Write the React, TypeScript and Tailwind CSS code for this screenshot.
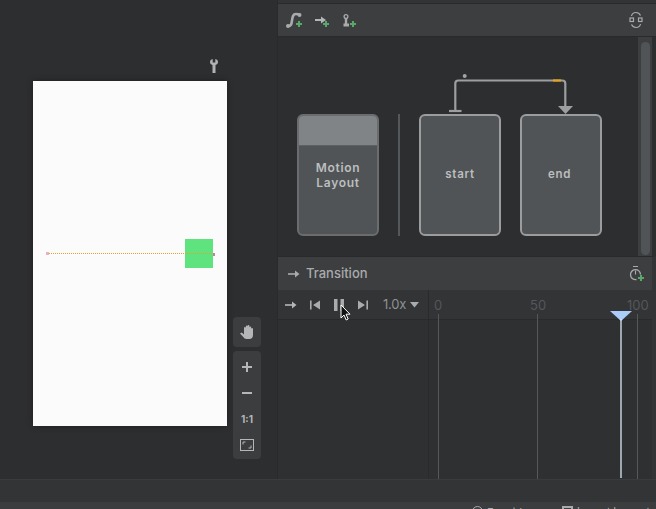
import React from "react";

const font = { fontFamily: '"Inter", "Liberation Sans", sans-serif' };

function Plus({ x, y }: { x: number; y: number }) {
  return <path d={`M${x - 3} ${y}h6M${x} ${y - 3}v6`} stroke="#59a869" strokeWidth="2" fill="none" />;
}

function NodeCard({ label, end }: { label: string; end?: boolean }) {
  return (
    <div className="w-[82px] h-[122px] rounded-[6px] border-2 border-[#9a9c9d] bg-[#505456] flex items-center justify-center text-[11.5px] font-semibold tracking-[0.7px] text-[#bcbebf]">
      <span className={end ? "pr-[3px]" : ""}>{label}</span>
    </div>
  );
}

export default function App() {
  return (
    <div className="w-[656px] h-[509px] overflow-hidden flex flex-col bg-[#2d2e30]" style={font}>
      <div className="flex h-[479px]">
        {/* Design surface */}
        <div className="relative w-[278px] pt-[81px] pl-[33px] bg-[#2d2e30] border-r border-[#292a2c]">
          <svg className="absolute left-[208px] top-[58px]" width="12" height="16" viewBox="0 0 12 16">
            <path d="M4.700 1C3 1.300 2 2.700 2 4c0 1.500 1 2.500 2.500 3v8h3V7C9 6.500 10 5.500 10 4c0-1.300-1-2.700-2.700-3v3.500H4.700z" fill="#b0b2b3" />
          </svg>
          <div className="relative w-[194px] h-[345px] bg-[#fbfbfb] shadow-[0_0_6px_rgba(0,0,0,0.35)]">
            <div className="absolute left-[152px] top-[158px] w-[28px] h-[29px] bg-[#5fe37e]" />
            <div className="absolute left-[15px] top-[172px] w-[166px] border-t border-dotted border-[#e8a02c]" />
            <div className="absolute left-[13px] top-[171px] w-[3px] h-[3px] bg-[#e6b3c1]" />
            <div className="absolute left-[180px] top-[172px] w-[2px] h-[3px] bg-[#c97f95]" />
          </div>
          <div className="absolute left-[233px] top-[317px] flex flex-col gap-[4px] text-[#b4b6b7]">
            <div className="w-[28px] h-[30px] rounded-[4px] bg-[#3c3d3f] flex items-center justify-center">
              <svg width="16" height="16" viewBox="0 0 16 16">
                <path d="M1 9.500 2.800 8.500 5 10.500V4a.9.900 0 0 1 1.800 0V7V2.500a.9.900 0 0 1 1.800 0V7V2a.9.900 0 0 1 1.800 0V7.500V3.500a.9.900 0 0 1 1.800 0V7.500V5a.9.900 0 0 1 1.800 0v6c0 2.500-1.500 4-3.500 4H7.500c-1.500 0-2.500-.8-3.200-2z" fill="#b4b6b7" />
              </svg>
            </div>
            <div className="w-[28px] h-[108px] rounded-[4px] bg-[#3c3d3f] flex flex-col items-center pt-[6px] gap-[6px]">
              <svg width="20" height="20" viewBox="0 0 20 20"><path d="M10 5v10M5 10h10" stroke="#b4b6b7" strokeWidth="2" /></svg>
              <svg width="20" height="20" viewBox="0 0 20 20"><path d="M5 10h10" stroke="#b4b6b7" strokeWidth="2" /></svg>
              <div className="h-[20px] flex items-center text-[10px] font-bold text-[#b4b6b7]">1:1</div>
              <svg width="20" height="20" viewBox="0 0 20 20" fill="none">
                <rect x="3.500" y="4.500" width="13" height="11" stroke="#b4b6b7" />
                <path d="M6 9.500V7h2.500M14 10.500V13h-2.500" stroke="#b4b6b7" />
              </svg>
            </div>
          </div>
        </div>

        {/* Right column */}
        <div className="w-[378px] flex flex-col">
          <div className="h-[4px] border-b border-[#292a2c] bg-[#333436]" />
          <div className="h-[33px] flex items-center justify-between pl-[7px] pr-[13px] bg-[#3c3e40] border-b border-[#292a2c]">
            <div className="flex items-center gap-[9px]">
              <svg width="20" height="20" viewBox="0 0 20 20" fill="none">
                <path d="M3 16c3 0 3.500-1.500 4-5.500S8 4 11 4c2 0 3 .5 4 1" stroke="#a8aaab" strokeWidth="2.600" />
                <circle cx="3" cy="16" r="2" fill="#a8aaab" />
                <circle cx="14.500" cy="5" r="2" fill="#a8aaab" />
                <Plus x={14} y={14} />
              </svg>
              <svg width="18" height="20" viewBox="0 0 18 20" fill="none">
                <path d="M1 10h7" stroke="#b4b6b7" strokeWidth="2" />
                <path d="M7 6.500l5 3.500-5 3.500z" fill="#b4b6b7" />
                <Plus x={12} y={14} />
              </svg>
              <svg width="18" height="20" viewBox="0 0 18 20" fill="none">
                <circle cx="5" cy="6.500" r="1.900" stroke="#a8aaab" strokeWidth="1.300" />
                <path d="M5 8v6" stroke="#a8aaab" strokeWidth="2.400" />
                <path d="M2.500 13.500h5.500v3H2.500z" fill="#a8aaab" />
                <Plus x={12} y={14} />
              </svg>
            </div>
            <svg width="14" height="18" viewBox="0 0 14 18" fill="none" stroke="#a8aaab" strokeWidth="1.200">
              <path d="M2.500 5C3 2.500 5 1.500 7 1.500s3.500 1 4.500 3M11.500 13c-.5 2.500-2.500 3.500-4.500 3.500s-3.500-1-4.500-3" />
              <rect x="1" y="7" width="3.500" height="3.500" />
              <rect x="9.500" y="7" width="3.500" height="3.500" />
            </svg>
          </div>

          {/* Graph */}
          <div className="relative h-[219px] flex bg-[#2d2e30]">
            <div className="w-[360px] pl-[19px] pt-[77px] flex items-start">
              <div className="w-[82px] h-[122px] rounded-[6px] border-2 border-[#6a6c6e] bg-[#505456] flex flex-col overflow-hidden">
                <div className="h-[30px] bg-[#808486] border-b border-[#5e6163]" />
                <div className="flex-1 pt-[14px] text-center text-[12px] leading-[15px] font-semibold tracking-[0.7px] text-[#bcbebf]">
                  Motion<br />Layout
                </div>
              </div>
              <div className="ml-[19px] w-[2px] h-[122px] bg-[#55585a]" />
              <div className="ml-[19px]"><NodeCard label="start" /></div>
              <div className="ml-[19px]"><NodeCard label="end" end /></div>
            </div>
            <div className="w-[14px] bg-[#3c3e40] pl-[3px] pt-[5px]">
              <div className="w-[9px] h-[213px] rounded-[5px] bg-[#505456]" />
            </div>
            <svg className="absolute left-[170px] top-[35px]" width="126" height="45" viewBox="0 0 126 45" fill="none">
              <circle cx="16.700" cy="4" r="2" fill="#a2a4a5" />
              <path d="M7.300 39V11.500a3 3 0 0 1 3-3H114.300a3 3 0 0 1 3 3V36" stroke="#9c9e9f" strokeWidth="2.200" />
              <path d="M1 39h12.500" stroke="#9c9e9f" strokeWidth="2.200" />
              <path d="M105 8.500h8" stroke="#e8a317" strokeWidth="2.200" />
              <path d="M110 34h15l-7.500 8z" fill="#9c9e9f" />
            </svg>
          </div>

          {/* Transition header */}
          <div className="h-[34px] flex items-center justify-between pl-[10px] pr-[8px] bg-[#3c3e40] border-t border-r-4 border-t-[#292a2c] border-r-[#333436]">
            <div className="flex items-center gap-[6px] text-[13px] font-medium text-[#a9abac]">
              <svg width="12" height="12" viewBox="0 0 12 12" fill="none">
                <path d="M0 6h8" stroke="#a9abac" strokeWidth="1.600" />
                <path d="M7 2.500 11.500 6 7 9.500z" fill="#a9abac" />
              </svg>
              <span>Transition</span>
            </div>
            <svg width="16" height="18" viewBox="0 0 16 18" fill="none">
              <path d="M5 1.500h5M7.500 5.500v4" stroke="#a8aaab" strokeWidth="1.100" />
              <path d="M12.500 9.500a5 5 0 1 0-4 5" stroke="#a8aaab" strokeWidth="1.300" />
              <Plus x={13} y={13} />
            </svg>
          </div>

          {/* Timeline */}
          <div className="relative flex-1 flex flex-col bg-[#2e3032] border-r-4 border-r-[#333436]">
            <div className="h-[30px] flex bg-[#323436] border-b border-[#292a2c]">
              <div className="w-[151px] flex items-center pl-[7px] text-[#a9abac] border-r border-[#292a2c]">
                <svg width="12" height="12" viewBox="0 0 12 12" fill="none">
                  <path d="M0 6h8" stroke="#b4b6b7" strokeWidth="1.600" />
                  <path d="M7 2.500 11.500 6 7 9.500z" fill="#b4b6b7" />
                </svg>
                <svg className="ml-[12px]" width="12" height="12" viewBox="0 0 12 12">
                  <path d="M1 1.500h1.600v9H1zM11 1.500v9L4 6z" fill="#a9abac" />
                </svg>
                <svg className="ml-[12px]" width="12" height="14" viewBox="0 0 12 14">
                  <path d="M1 1h3.500v12H1zM7.500 1H11v12H7.500z" fill="#a9abac" />
                </svg>
                <svg className="ml-[12px]" width="12" height="12" viewBox="0 0 12 12">
                  <path d="M1 1.500v9L8 6zM9.400 1.500H11v9H9.400z" fill="#a9abac" />
                </svg>
                <span className="ml-[14px] text-[13px] tracking-[-0.2px] text-[#8f9192]">1.0x</span>
                <svg className="ml-[4px]" width="9" height="6" viewBox="0 0 9 6"><path d="M0 0h9L4.500 5.500z" fill="#a9abac" /></svg>
              </div>
              <div className="flex-1 relative text-[13px] text-[#55575a]">
                <span className="absolute left-[5px] top-[6px]">0</span>
                <span className="absolute left-[101px] top-[6px]">50</span>
                <span className="absolute left-[198px] top-[6px]">100</span>
              </div>
            </div>
            <div className="flex-1 flex">
              <div className="w-[151px] border-r border-[#292a2c]" />
              <div className="flex-1 flex">
                <div className="-mt-[6px] ml-[9px] w-px bg-[#55585a]" />
                <div className="-mt-[6px] ml-[98px] w-px bg-[#55585a]" />
                <div className="-mt-[6px] ml-[99px] w-px bg-[#55585a]" />
              </div>
            </div>
            {/* playhead */}
            <svg className="absolute left-[332px] top-[21px]" width="22" height="167" viewBox="0 0 22 167">
              <path d="M0 0h22L11 10z" fill="#a9cdf8" />
              <path d="M11 8v159" stroke="#dce9fb" strokeWidth="1.300" />
            </svg>
            {/* cursor */}
            <svg className="absolute left-[62px] top-[14px]" width="12" height="18" viewBox="0 0 12 18">
              <path d="M1 1v13l3-3 2.200 5 2-1-2.200-4.800H10z" fill="#111" stroke="#fff" strokeWidth="1" />
            </svg>
          </div>
        </div>
      </div>

      {/* Bottom bars */}
      <div className="h-[23px] bg-[#333436] border-t border-[#3a3b3d]" />
      <div className="relative h-[7px] bg-[#3c3d3f] overflow-hidden text-[11px] text-[#a9abac] whitespace-nowrap">
        <div className="absolute left-[472px] top-[4px] flex items-start gap-[4px] leading-[12px]">
          <span className="w-[11px] h-[11px] rounded-full border border-[#a9abac]" />
          <span>Event Log</span>
        </div>
        <div className="absolute left-[562px] top-[4px] flex items-start gap-[4px] leading-[12px]">
          <span className="w-[11px] h-[11px] border-2 border-[#a9abac]" />
          <span className="text-[10.500px]">Layout Inspector</span>
        </div>
      </div>
    </div>
  );
}
